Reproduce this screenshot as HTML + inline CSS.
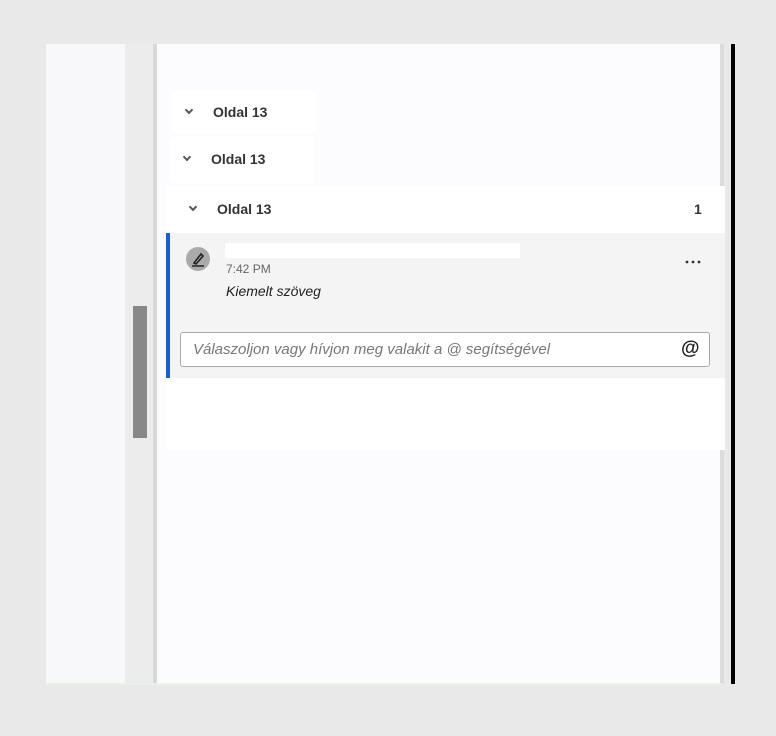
<!DOCTYPE html>
<html><head><style>
body{margin:0;width:776px;height:736px;background:#e9e9e9;position:relative;font-family:"Liberation Sans",Arial,sans-serif;overflow:hidden}
.a{position:absolute}
.h{font-weight:bold;font-size:14px;color:#333}
.chev{position:absolute;width:4px;height:4px;border-right:2px solid #555;border-bottom:2px solid #555;transform:rotate(45deg)}
</style></head><body>
<div class="a" style="left:46px;top:44px;width:79px;height:640px;background:#f8f7fa"></div>
<div class="a" style="left:125px;top:44px;width:28px;height:640px;background:#ececec"></div>
<div class="a" style="left:153px;top:44px;width:4px;height:640px;background:#d8d8d8"></div>
<div class="a" style="left:133px;top:306px;width:14px;height:132px;background:#888"></div>
<div class="a" style="left:157px;top:44px;width:563px;height:640px;background:#fcfbfd"></div>
<div class="a" style="left:720px;top:44px;width:4px;height:640px;background:#dcdcdc"></div>
<div class="a" style="left:731px;top:44px;width:4px;height:640px;background:#000"></div>
<div class="a" style="left:46px;top:683px;width:676px;height:2px;background:#e6f3e6"></div>

<div class="a" style="left:172px;top:90px;width:144px;height:44px;background:#fff"></div>
<div class="chev" style="left:186px;top:107px"></div>
<div class="a h" style="left:213px;top:104px">Oldal 13</div>
<div class="a" style="left:170px;top:137px;width:144px;height:46px;background:#fff"></div>
<div class="chev" style="left:184px;top:154px"></div>
<div class="a h" style="left:211px;top:151px">Oldal 13</div>

<div class="a" style="left:166px;top:186px;width:559px;height:47px;background:#fff"></div>
<div class="chev" style="left:190px;top:204px"></div>
<div class="a h" style="left:217px;top:201px">Oldal 13</div>
<div class="a h" style="left:694px;top:201px">1</div>

<div class="a" style="left:166px;top:233px;width:559px;height:145px;background:#f4f4f4"></div>
<div class="a" style="left:166px;top:233px;width:4px;height:145px;background:#1a5fd6"></div>
<div class="a" style="left:186px;top:247px;width:24px;height:24px;border-radius:50%;background:#aaa"></div>
<svg class="a" style="left:186px;top:247px" width="24" height="24" viewBox="0 0 24 24"><path d="M8 16 L15 7 L17 9 L10 17 Z" fill="none" stroke="#222" stroke-width="1.6"/><path d="M6 19 H18" stroke="#222" stroke-width="1.5"/></svg>
<div class="a" style="left:225px;top:243px;width:295px;height:15px;background:#fff"></div>
<div class="a" style="left:226px;top:262px;font-size:12px;color:#666">7:42 PM</div>
<div class="a" style="left:226px;top:283px;font-size:14px;font-style:italic;color:#222">Kiemelt szöveg</div>
<svg class="a" style="left:685px;top:259px" width="16" height="6"><circle cx="2" cy="3" r="1.4" fill="#333"/><circle cx="8" cy="3" r="1.4" fill="#333"/><circle cx="14" cy="3" r="1.4" fill="#333"/></svg>
<div class="a" style="left:180px;top:332px;width:528px;height:33px;background:#fff;border:1px solid #aaa;border-radius:3px"></div>
<div class="a" style="left:193px;top:341px;font-size:15px;font-style:italic;color:#777">Válaszoljon vagy hívjon meg valakit a @ segítségével</div>
<div class="a" style="left:681px;top:338px;font-size:19px;font-weight:bold;color:#222">@</div>
<div class="a" style="left:166px;top:378px;width:559px;height:72px;background:#fff"></div>
</body></html>
